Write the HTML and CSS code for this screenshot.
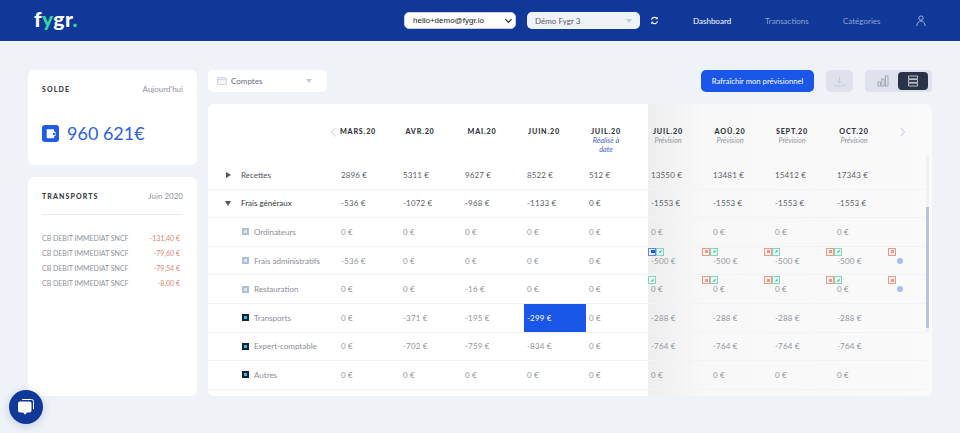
FILE: index.html
```html
<!DOCTYPE html>
<html lang="fr">
<head>
<meta charset="utf-8">
<title>Fygr</title>
<link rel="stylesheet" href="styles.css">
</head>
<body>
<header class="topbar">
  <div class="logo">f<span class="logo-y">y</span>gr<span class="logo-y">.</span></div>
  <div class="top-controls">
    <div class="account-wrap"><select class="account-select"><option>hello+demo@fygr.io</option></select></div>
    <div class="company-select"><span>Démo Fygr 3</span><i class="caret"></i></div>
    <svg class="refresh" viewBox="0 0 12 12"><path d="M2 5a4 4 0 0 1 7-1.8M10 7a4 4 0 0 1-7 1.8" fill="none" stroke="#fff" stroke-width="1.6"/><path d="M10.3 1v3.400H7ZM1.700 11V7.600H5Z" fill="#fff"/></svg>
  </div>
  <nav class="nav">
    <a class="nav-link active">Dashboard</a>
    <a class="nav-link">Transactions</a>
    <a class="nav-link">Catégories</a>
    <svg class="user" viewBox="0 0 12 14"><circle cx="6" cy="3.500" r="2.600" fill="none" stroke="#b9c6e6"/><path d="M1 13c.4-4 2.500-6 5-6s4.600 2 5 6" fill="none" stroke="#b9c6e6"/></svg>
  </nav>
</header>

<main class="page">
  <aside class="side">
    <section class="card solde">
      <div class="card-head"><h2>SOLDE</h2><span>Aujourd'hui</span></div>
      <div class="balance">
        <span class="wallet"><svg viewBox="0 0 18 18"><path d="M5 4.500h7l1 1v2h1.500v4H13v1.500a1 1 0 0 1-1 1H6a1 1 0 0 1-1-1Z" fill="#fff"/><rect x="11.500" y="8.500" width="2.500" height="2" fill="#1f5ae8"/></svg></span>
        <span class="amount">960 621€</span>
      </div>
    </section>
    <section class="card details">
      <div class="card-head ruled"><h2>TRANSPORTS</h2><span>Juin 2020</span></div>
      <ul class="tx-list">
        <li><span>CB DEBIT IMMEDIAT SNCF</span><b>-131,40 €</b></li>
        <li><span>CB DEBIT IMMEDIAT SNCF</span><b>-79,60 €</b></li>
        <li><span>CB DEBIT IMMEDIAT SNCF</span><b>-79,54 €</b></li>
        <li><span>CB DEBIT IMMEDIAT SNCF</span><b>-8,00 €</b></li>
      </ul>
    </section>
  </aside>

  <section class="content">
    <div class="toolbar">
      <div class="accounts">
        <svg class="card-ico" viewBox="0 0 12 10"><rect x=".5" y=".5" width="11" height="9" rx="1" fill="#f3f4f8" stroke="#c5cad8"/><path d="M.5 3h11" stroke="#c5cad8"/></svg>
        <span>Comptes</span><i class="caret"></i>
      </div>
      <div class="tools">
        <button class="primary">Rafraîchir mon prévisionnel</button>
        <div class="dl"><svg viewBox="0 0 12 12"><path d="M6 1v7M3.500 5.500 6 8l2.500-2.500M1 8.500V11h10V8.500" fill="none" stroke="#c3c9db"/></svg></div>
        <div class="toggle">
          <span class="tog"><svg viewBox="0 0 12 12"><rect x="1" y="7" width="2.400" height="4" fill="none" stroke="#8d93a5" stroke-width=".7"/><rect x="4.800" y="4" width="2.400" height="7" fill="none" stroke="#8d93a5" stroke-width=".7"/><rect x="8.600" y="1" width="2.400" height="10" fill="none" stroke="#8d93a5" stroke-width=".7"/></svg></span>
          <span class="tog on"><svg viewBox="0 0 12 12"><path d="M1.500 1h9v2.800h-9ZM1.500 4.600h9v2.800h-9ZM1.500 8.200h9V11h-9Z" fill="none" stroke="#dfe2ec" stroke-width=".8"/></svg></span>
        </div>
      </div>
    </div>

    <div class="table">
      <div class="row head">
        <div class="label"><svg class="chev left" viewBox="0 0 8 12"><path d="M6.500 1 1.500 6l5 5" fill="none" stroke="#b9c3e0" stroke-width="1.200"/></svg></div>
        <div class="col"><div class="month">MARS.20</div></div>
        <div class="col"><div class="month">AVR.20</div></div>
        <div class="col"><div class="month">MAI.20</div></div>
        <div class="col"><div class="month">JUIN.20</div></div>
        <div class="col"><div class="month">JUIL.20</div><em class="real">Réalisé à date</em></div>
        <div class="col"><div class="month">JUIL.20</div><em>Prévision</em></div>
        <div class="col"><div class="month">AOÛ.20</div><em>Prévision</em></div>
        <div class="col"><div class="month">SEPT.20</div><em>Prévision</em></div>
        <div class="col"><div class="month">OCT.20</div><em>Prévision</em></div>
        <div class="col last"><svg class="chev" viewBox="0 0 8 12"><path d="M1.500 1l5 5-5 5" fill="none" stroke="#b9c3e0" stroke-width="1.200"/></svg></div>
      </div>

      <div class="row main">
        <div class="label"><i class="tri right"></i>Recettes</div>
        <div class="cell">2896 €</div><div class="cell">5311 €</div><div class="cell">9627 €</div><div class="cell">8522 €</div><div class="cell">512 €</div>
        <div class="cell">13550 €</div><div class="cell">13481 €</div><div class="cell">15412 €</div><div class="cell">17343 €</div>
      </div>
      <div class="row main">
        <div class="label strong"><i class="tri down"></i>Frais généraux</div>
        <div class="cell">-536 €</div><div class="cell">-1072 €</div><div class="cell">-968 €</div><div class="cell">-1133 €</div><div class="cell">0 €</div>
        <div class="cell">-1553 €</div><div class="cell">-1553 €</div><div class="cell">-1553 €</div><div class="cell">-1553 €</div>
      </div>
      <div class="row sub">
        <div class="label"><i class="sq lite"></i>Ordinateurs</div>
        <div class="cell">0 €</div><div class="cell">0 €</div><div class="cell">0 €</div><div class="cell">0 €</div><div class="cell">0 €</div>
        <div class="cell">0 €</div><div class="cell">0 €</div><div class="cell">0 €</div><div class="cell">0 €</div>
      </div>
      <div class="row sub">
        <div class="label"><i class="sq lite"></i>Frais administratifs</div>
        <div class="cell">-536 €</div><div class="cell">0 €</div><div class="cell">0 €</div><div class="cell">0 €</div><div class="cell">0 €</div>
        <div class="cell"><span class="acts flush"><i class="act blue"></i><i class="act green"></i></span>-500 €</div>
        <div class="cell"><span class="acts"><i class="act red"></i><i class="act green"></i></span>-500 €</div>
        <div class="cell"><span class="acts"><i class="act red"></i><i class="act green"></i></span>-500 €</div>
        <div class="cell"><span class="acts"><i class="act red"></i><i class="act green"></i></span>-500 €</div>
        <div class="cell"><span class="acts"><i class="act red"></i></span><i class="dot"></i></div>
      </div>
      <div class="row sub">
        <div class="label"><i class="sq lite"></i>Restauration</div>
        <div class="cell">0 €</div><div class="cell">0 €</div><div class="cell">-16 €</div><div class="cell">0 €</div><div class="cell">0 €</div>
        <div class="cell"><span class="acts flush"><i class="act green"></i></span>0 €</div>
        <div class="cell"><span class="acts"><i class="act red"></i><i class="act green"></i></span>0 €</div>
        <div class="cell"><span class="acts"><i class="act red"></i><i class="act green"></i></span>0 €</div>
        <div class="cell"><span class="acts"><i class="act red"></i><i class="act green"></i></span>0 €</div>
        <div class="cell"><span class="acts"><i class="act red"></i></span><i class="dot"></i></div>
      </div>
      <div class="row sub">
        <div class="label"><i class="sq dark"></i>Transports</div>
        <div class="cell">0 €</div><div class="cell">-371 €</div><div class="cell">-195 €</div><div class="cell selected">-299 €</div><div class="cell">0 €</div>
        <div class="cell">-288 €</div><div class="cell">-288 €</div><div class="cell">-288 €</div><div class="cell">-288 €</div>
      </div>
      <div class="row sub">
        <div class="label"><i class="sq dark"></i>Expert-comptable</div>
        <div class="cell">0 €</div><div class="cell">-702 €</div><div class="cell">-759 €</div><div class="cell">-834 €</div><div class="cell">0 €</div>
        <div class="cell">-764 €</div><div class="cell">-764 €</div><div class="cell">-764 €</div><div class="cell">-764 €</div>
      </div>
      <div class="row sub">
        <div class="label"><i class="sq dark"></i>Autres</div>
        <div class="cell">0 €</div><div class="cell">0 €</div><div class="cell">0 €</div><div class="cell">0 €</div><div class="cell">0 €</div>
        <div class="cell">0 €</div><div class="cell">0 €</div><div class="cell">0 €</div><div class="cell">0 €</div>
      </div>
      <div class="scrollbar"><div class="thumb"></div></div>
    </div>
  </section>
</main>

<div class="chat"><svg viewBox="0 0 20 20"><path d="M6 2.500h9.500a2 2 0 0 1 2 2V12" fill="none" stroke="#fff" stroke-width="1"/><path d="M4 4.500h9.500a2 2 0 0 1 2 2v7a2 2 0 0 1-2 2H11l-2 2.200L7 15.500H4a2 2 0 0 1-2-2v-7a2 2 0 0 1 2-2Z" fill="#fff"/></svg></div>
</body>
</html>
```

FILE: styles.css
```css
* { box-sizing: border-box; }
html, body { margin: 0; height: 100%; }
body {
  width: 960px;
  height: 433px;
  overflow: hidden;
  background: #eff2f7;
  font-family: Lato, "Noto Sans", sans-serif;
  font-size: 8px;
  color: #7f838c;
  position: relative;
}
h2, ul { margin: 0; padding: 0; }

/* top bar */
.topbar {
  height: 41px;
  background: #0f3899;
  display: flex;
  align-items: center;
  padding: 0 32px 0 34px;
}
.logo { font-size: 21px; font-weight: 900; color: #fff; width: 370px; letter-spacing: .4px; line-height: 1; margin-top: -4px; }
.logo-y { color: #33d69f; }
.top-controls { display: flex; align-items: center; gap: 11px; }
.account-wrap { position: relative; width: 112px; height: 17px; }
.account-wrap::after {
  content: ""; position: absolute; right: 5px; top: 5px;
  width: 4px; height: 4px;
  border-right: 1.300px solid #222; border-bottom: 1.300px solid #222;
  transform: rotate(45deg);
  pointer-events: none;
}
.account-select {
  appearance: none;
  width: 112px; height: 17px; padding: 0 0 0 8px; display: block;
  background: #fff; border: 1px solid #ccd; border-radius: 5px;
  font: 8px "Liberation Sans", sans-serif; color: #222;
}
.company-select {
  width: 113px; height: 17px; padding: 0 8px;
  background: #eff2f7; border-radius: 5px;
  display: flex; align-items: center; justify-content: space-between;
  font-size: 8px; color: #555b68;
}
.caret { width: 0; height: 0; border: 3px solid transparent; border-top: 4px solid #c3c8d4; border-bottom: 0; }
.refresh { width: 9px; height: 9px; margin-left: -1px; }
.nav { display: flex; align-items: center; margin-left: 34px; }
.nav-link { font-size: 8px; color: #8fa3d4; }
.nav-link.active { color: #fff; width: 72px; }
.nav-link:nth-child(2) { width: 78px; }
.nav-link:nth-child(3) { width: 73px; }
.user { width: 10px; height: 12px; }

/* page layout */
.page { display: flex; gap: 11px; padding: 29px 28px 0; }
.side { width: 169px; display: flex; flex-direction: column; gap: 12px; }
.card { background: #fff; border-radius: 6px; padding: 14px; }
.solde { height: 95px; }
.details { height: 219px; }
.card-head { display: flex; justify-content: space-between; align-items: center; height: 10px; font-size: 8px; color: #8f939c; }
.card-head h2 { font-size: 7px; font-weight: 900; letter-spacing: 1.1px; color: #3d4048; }
.ruled { height: 26px; padding-bottom: 12px; border-bottom: 1px solid #e8ebf0; margin-top: -2px; }
.balance { display: flex; align-items: center; gap: 8px; margin-top: 30px; }
.wallet { width: 17px; height: 17px; border-radius: 3px; background: #1f5ae8; display: flex; }
.wallet svg { width: 17px; height: 17px; }
.amount { font-size: 18px; color: #2f5fdd; line-height: 1; }
.tx-list { list-style: none; margin-top: 15px; padding-right: 3px; }
.tx-list li { height: 15px; display: flex; justify-content: space-between; align-items: center; font-size: 7px; color: #8f939c; }
.tx-list b { font-weight: 400; color: #e08572; }

/* toolbar */
.content { width: 724px; display: flex; flex-direction: column; gap: 12px; }
.toolbar { height: 22px; display: flex; justify-content: space-between; }
.accounts {
  width: 119px; background: #fff; border-radius: 5px;
  display: flex; align-items: center; padding: 0 15px 0 9px; font-size: 8px; color: #666b76;
}
.card-ico { width: 10px; height: 8px; margin-right: 4px; }
.accounts .caret { margin-left: auto; }
.tools { display: flex; }
.primary {
  width: 113px; height: 22px; border: 0; border-radius: 5px;
  background: #1a56e8; color: #fff; font: 7.700px Lato, sans-serif; padding: 0;
}
.dl { width: 27px; height: 22px; margin-left: 12px; border-radius: 5px; background: #dfe2ec; display: flex; align-items: center; justify-content: center; }
.dl svg { width: 11px; height: 11px; }
.toggle { width: 67px; height: 22px; margin-left: 12px; border-radius: 4px; background: #dfe2ec; display: flex; padding: 2px 4px 2px 2px; align-items: stretch; justify-content: flex-end; }
.tog { width: 30px; display: flex; align-items: center; justify-content: center; }
.tog svg { width: 12px; height: 12px; }
.tog.on { background: #2a3247; border-radius: 4px; }

/* table */
.table {
  position: relative;
  height: 292px;
  border-radius: 6px;
  background: linear-gradient(90deg, #fff 440px, #eeeeee 440px, #f8f8f8 495px, #fafafa 100%);
}
.row { display: flex; height: 28.600px; align-items: center; border-bottom: 1px solid #f1f3f6; margin-right: 7px; }
.row.head { height: 57px; border: 0; align-items: flex-start; padding-top: 23px; }
.label { width: 130px; flex: none; display: flex; align-items: center; position: relative; color: #4f535c; padding-left: 33px; }
.label.strong { color: #33363e; }
.row.sub .label { color: #8a8e97; padding-left: 46px; }
.head .label { height: 10px; padding: 0; justify-content: flex-end; }
.chev { width: 7px; height: 10px; }
.chev.left { margin-right: 1px; }
.col { width: 62px; flex: none; }
.col.last { padding-left: 3px; }
.month { width: 40px; text-align: center; font-size: 7.200px; font-weight: 900; letter-spacing: .8px; color: #33363e; line-height: 10px; white-space: nowrap; }
.col em { display: block; width: 40px; text-align: center; font-size: 7.300px; line-height: 8.500px; color: #8f939c; }
.col em.real { color: #3f64b8; padding: 0 5px; }
.cell { width: 62px; flex: none; align-self: stretch; display: flex; align-items: center; padding-left: 3px; position: relative; letter-spacing: .15px; }
.row.main .cell { color: #5b5f68; }
.row.sub .cell { color: #92969e; }
.row .cell.selected { background: #1a56e8; color: #fff; }
.tri { position: absolute; left: 18px; width: 0; height: 0; }
.tri.right { border-left: 5px solid #555; border-top: 3px solid transparent; border-bottom: 3px solid transparent; }
.tri.down { left: 17px; border-top: 5px solid #555; border-left: 3px solid transparent; border-right: 3px solid transparent; }
.sq { position: absolute; left: 34px; width: 7px; height: 7px; border: 2px solid; }
.sq.lite { background: #d8e6ee; border-color: #b3bfd0; }
.sq.dark { background: #2fc6a0; border-color: #0d1f4f; }
.acts { position: absolute; top: 1px; left: -8px; display: flex; }
.acts.flush { left: 0; }
.act { width: 8px; height: 8px; border: 1px solid; display: block; background: #fff; position: relative; }
.act::after { content: ""; position: absolute; left: 1.500px; top: 1.500px; width: 3px; height: 3px; }
.act.red { border-color: #ea9a88; background: #fdf0ed; }
.act.red::after { background: #ea9a88; }
.act.green { border-color: #7fd8b8; background: #effaf6; }
.act.green::after { background: #27b98a; transform: rotate(45deg) scaleX(.4); }
.act.blue { border-color: #5f85e8; background: #eef2fd; }
.act.blue::after { background: #1a56e8; width: 4px; }
.dot { width: 6px; height: 6px; border-radius: 50%; background: #a9bdf0; margin-left: -2px; }
.scrollbar { position: absolute; left: 718px; top: 51px; width: 3px; height: 177px; background: #f0f1f4; }
.thumb { margin-top: 52px; height: 121px; background: #b9c3df; }

/* chat */
.chat {
  position: absolute; left: 9px; top: 390px;
  width: 34px; height: 34px; border-radius: 50%;
  background: #0f3899; box-shadow: 0 2px 10px rgba(15, 56, 153, .2);
  display: flex; align-items: center; justify-content: center;
}
.chat svg { width: 20px; height: 20px; }
```
